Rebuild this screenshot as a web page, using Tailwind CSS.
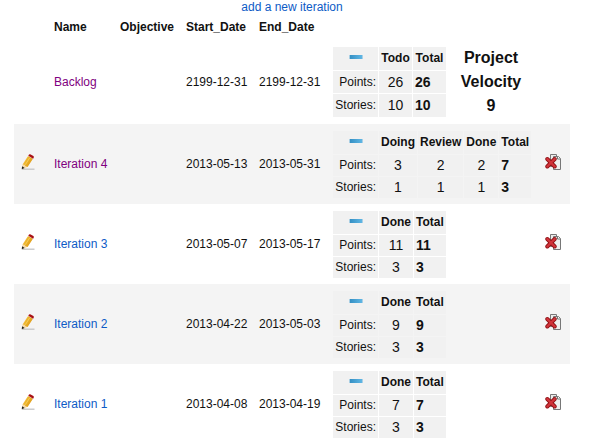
<!DOCTYPE html>
<html lang="en">
<head>
<meta charset="utf-8">
<title>Iterations</title>
<script src="https://cdn.jsdelivr.net/npm/@tailwindcss/browser@4"></script>
</head>
<body class="bg-white pl-[14px] pr-[27px] font-['Liberation_Sans',Arial,sans-serif] text-xs text-[#111]">
<svg class="absolute size-0" aria-hidden="true">
  <defs>
    <linearGradient id="bar"><stop offset="0" stop-color="#3590c4"/><stop offset="1" stop-color="#5fb6e4"/></linearGradient>
    <linearGradient id="wood" x1="0" y1="0" x2="1" y2="0.6"><stop offset="0" stop-color="#f9c93c"/><stop offset="1" stop-color="#dd9a18"/></linearGradient>
    <symbol id="minus" viewBox="0 0 14 4"><rect width="14" height="4" fill="#a9cfe4"/><rect x="1" width="12" height="4" fill="url(#bar)"/></symbol>
    <symbol id="pencil" viewBox="0 0 16 16">
      <path d="M2 15.2h12.5" stroke="#c8c8c8" stroke-width="1.4"/>
      <path d="M7.6 2.6l4.6 2.7-5.5 8-4.7 1.9.6-4.9z" fill="#f6d9a4"/>
      <path d="M8.2 1.9l4.7 2.9-5.3 8.1-2.200-.8-.8-1.300-1.800-.4z" fill="url(#wood)"/>
      <path d="M9.7 3.9L5.4 10.6" stroke="#fbdc70" stroke-width=".7"/>
      <path d="M8.2 1.9l4.700 2.900.5-1-4.600-2.900z" fill="#e8e3dc"/>
      <path d="M8.7.9q.5-.9 1.5-.6l3.200 1.800q.8.7.3 1.600l-.6 1-4.700-2.900z" fill="#a90f14"/>
      <path d="M1.700 15.300l.4-3.100 2.500 1.900z" fill="#222"/>
    </symbol>
    <symbol id="remove" viewBox="0 0 16 16">
      <path d="M5.500.5h6v12h-6z" fill="#ececec" stroke="#777"/>
      <path d="M8.500 2.500h5l2 2v11h-7z" fill="#eef0ee" stroke="#777"/>
      <path d="M12.500 2.500v2.500h3" fill="#fff" stroke="#777"/>
      <path d="M2.300 5l7.400 7.500M9.700 5l-7.400 7.500" stroke="#8f1014" stroke-width="4" stroke-linecap="round"/>
      <path d="M2.300 5l7.400 7.500M9.700 5l-7.400 7.500" stroke="#d0343a" stroke-width="2.400" stroke-linecap="round"/>
    </symbol>
  </defs>
</svg>

<div class="text-center leading-[14px]"><a href="#" class="text-[#0d5bc6]">add a new iteration</a></div>

<table class="w-full table-fixed border-collapse leading-[14px] whitespace-nowrap">
  <colgroup><col class="w-[34px]"><col class="w-[66px]"><col class="w-[66px]"><col class="w-[73px]"><col class="w-[74px]"><col class="w-[212px]"><col></colgroup>
  <thead>
    <tr class="h-[26px] text-left">
      <td></td>
      <th scope="col" class="px-[6px]">Name</th>
      <th scope="col" class="px-[6px]">Objective</th>
      <th scope="col" class="px-[6px]">Start_Date</th>
      <th scope="col" class="px-[6px]">End_Date</th>
      <td></td>
      <td></td>
    </tr>
  </thead>
  <tbody>
    <tr class="h-[84px]">
      <td></td>
      <td class="px-[6px]"><a href="#" class="text-[#800080]">Backlog</a></td>
      <td></td>
      <td class="px-[6px]">2199-12-31</td>
      <td class="px-[6px]">2199-12-31</td>
      <td class="pt-[6px] pl-[5px] align-top">
        <div class="flex">
          <table class="border-separate border-spacing-px">
            <tr class="h-[23px] bg-[#f1f1f1]"><th class="w-[45px] px-[2px] pb-1"><button type="button" aria-label="Collapse" class="mx-auto block"><svg class="h-1 w-[14px]"><use href="#minus"/></svg></button></th><th class="w-[33px] px-[2px] pb-[2px]">Todo</th><th class="w-[33px] px-[2px] pb-[2px]">Total</th></tr>
            <tr class="h-[22px] bg-[#f1f1f1]"><td class="px-[2px] text-right">Points:</td><td class="text-center text-sm leading-4">26</td><td class="px-[2px] text-sm leading-4 font-bold">26</td></tr>
            <tr class="h-[23px] bg-[#f1f1f1]"><td class="px-[2px] pb-[2px] text-right">Stories:</td><td class="pb-[2px] text-center text-sm leading-4">10</td><td class="px-[2px] pb-[2px] text-sm leading-4 font-bold">10</td></tr>
          </table>
          <h2 class="w-[88px] px-3 text-center text-base leading-6 font-bold whitespace-normal">Project Velocity 9</h2>
        </div>
      </td>
      <td></td>
    </tr>
    <tr class="h-[80px] bg-[#f4f4f4]">
      <td class="pb-1 pl-[6px]"><button type="button" aria-label="Edit Iteration 4" class="block"><svg class="size-4"><use href="#pencil"/></svg></button></td>
      <td class="px-[6px]"><a href="#" class="text-[#800080]">Iteration 4</a></td>
      <td></td>
      <td class="px-[6px]">2013-05-13</td>
      <td class="px-[6px]">2013-05-31</td>
      <td class="pt-[6px] pl-[5px] align-top">
        <table class="border-separate border-spacing-px">
          <tr class="h-[23px] bg-[#f1f1f1]"><th class="w-[45px] px-[2px] pb-1"><button type="button" aria-label="Collapse" class="mx-auto block"><svg class="h-1 w-[14px]"><use href="#minus"/></svg></button></th><th class="px-[2px] pb-[2px]">Doing</th><th class="px-[2px] pb-[2px]">Review</th><th class="px-[2px] pb-[2px]">Done</th><th class="px-[2px] pb-[2px]">Total</th></tr>
          <tr class="h-[21px] bg-[#f1f1f1]"><td class="px-[2px] pb-[2px] text-right">Points:</td><td class="pb-[2px] text-center text-sm leading-4">3</td><td class="pb-[2px] text-center text-sm leading-4">2</td><td class="pb-[2px] text-center text-sm leading-4">2</td><td class="px-[2px] pb-[2px] text-sm leading-4 font-bold">7</td></tr>
          <tr class="h-[21px] bg-[#f1f1f1]"><td class="px-[2px] pb-[2px] text-right">Stories:</td><td class="pb-[2px] text-center text-sm leading-4">1</td><td class="pb-[2px] text-center text-sm leading-4">1</td><td class="pb-[2px] text-center text-sm leading-4">1</td><td class="px-[2px] pb-[2px] text-sm leading-4 font-bold">3</td></tr>
        </table>
      </td>
      <td class="pb-1 pl-[6px]"><button type="button" aria-label="Delete Iteration 4" class="block"><svg class="size-4"><use href="#remove"/></svg></button></td>
    </tr>
    <tr class="h-[80px]">
      <td class="pb-1 pl-[6px]"><button type="button" aria-label="Edit Iteration 3" class="block"><svg class="size-4"><use href="#pencil"/></svg></button></td>
      <td class="px-[6px]"><a href="#" class="text-[#0d5bc6]">Iteration 3</a></td>
      <td></td>
      <td class="px-[6px]">2013-05-07</td>
      <td class="px-[6px]">2013-05-17</td>
      <td class="pt-[6px] pl-[5px] align-top">
        <table class="border-separate border-spacing-px">
          <tr class="h-[23px] bg-[#f1f1f1]"><th class="w-[45px] px-[2px] pb-1"><button type="button" aria-label="Collapse" class="mx-auto block"><svg class="h-1 w-[14px]"><use href="#minus"/></svg></button></th><th class="px-[2px] pb-[2px]">Done</th><th class="px-[2px] pb-[2px]">Total</th></tr>
          <tr class="h-[21px] bg-[#f1f1f1]"><td class="px-[2px] pb-[2px] text-right">Points:</td><td class="pb-[2px] text-center text-sm leading-4">11</td><td class="px-[2px] pb-[2px] text-sm leading-4 font-bold">11</td></tr>
          <tr class="h-[21px] bg-[#f1f1f1]"><td class="px-[2px] pb-[2px] text-right">Stories:</td><td class="pb-[2px] text-center text-sm leading-4">3</td><td class="px-[2px] pb-[2px] text-sm leading-4 font-bold">3</td></tr>
        </table>
      </td>
      <td class="pb-1 pl-[6px]"><button type="button" aria-label="Delete Iteration 3" class="block"><svg class="size-4"><use href="#remove"/></svg></button></td>
    </tr>
    <tr class="h-[80px] bg-[#f4f4f4]">
      <td class="pb-1 pl-[6px]"><button type="button" aria-label="Edit Iteration 2" class="block"><svg class="size-4"><use href="#pencil"/></svg></button></td>
      <td class="px-[6px]"><a href="#" class="text-[#0d5bc6]">Iteration 2</a></td>
      <td></td>
      <td class="px-[6px]">2013-04-22</td>
      <td class="px-[6px]">2013-05-03</td>
      <td class="pt-[6px] pl-[5px] align-top">
        <table class="border-separate border-spacing-px">
          <tr class="h-[23px] bg-[#f1f1f1]"><th class="w-[45px] px-[2px] pb-1"><button type="button" aria-label="Collapse" class="mx-auto block"><svg class="h-1 w-[14px]"><use href="#minus"/></svg></button></th><th class="px-[2px] pb-[2px]">Done</th><th class="px-[2px] pb-[2px]">Total</th></tr>
          <tr class="h-[21px] bg-[#f1f1f1]"><td class="px-[2px] pb-[2px] text-right">Points:</td><td class="pb-[2px] text-center text-sm leading-4">9</td><td class="px-[2px] pb-[2px] text-sm leading-4 font-bold">9</td></tr>
          <tr class="h-[21px] bg-[#f1f1f1]"><td class="px-[2px] pb-[2px] text-right">Stories:</td><td class="pb-[2px] text-center text-sm leading-4">3</td><td class="px-[2px] pb-[2px] text-sm leading-4 font-bold">3</td></tr>
        </table>
      </td>
      <td class="pb-1 pl-[6px]"><button type="button" aria-label="Delete Iteration 2" class="block"><svg class="size-4"><use href="#remove"/></svg></button></td>
    </tr>
    <tr class="h-[80px]">
      <td class="pb-1 pl-[6px]"><button type="button" aria-label="Edit Iteration 1" class="block"><svg class="size-4"><use href="#pencil"/></svg></button></td>
      <td class="px-[6px]"><a href="#" class="text-[#0d5bc6]">Iteration 1</a></td>
      <td></td>
      <td class="px-[6px]">2013-04-08</td>
      <td class="px-[6px]">2013-04-19</td>
      <td class="pt-[6px] pl-[5px] align-top">
        <table class="border-separate border-spacing-px">
          <tr class="h-[23px] bg-[#f1f1f1]"><th class="w-[45px] px-[2px] pb-1"><button type="button" aria-label="Collapse" class="mx-auto block"><svg class="h-1 w-[14px]"><use href="#minus"/></svg></button></th><th class="px-[2px] pb-[2px]">Done</th><th class="px-[2px] pb-[2px]">Total</th></tr>
          <tr class="h-[21px] bg-[#f1f1f1]"><td class="px-[2px] pb-[2px] text-right">Points:</td><td class="pb-[2px] text-center text-sm leading-4">7</td><td class="px-[2px] pb-[2px] text-sm leading-4 font-bold">7</td></tr>
          <tr class="h-[21px] bg-[#f1f1f1]"><td class="px-[2px] pb-[2px] text-right">Stories:</td><td class="pb-[2px] text-center text-sm leading-4">3</td><td class="px-[2px] pb-[2px] text-sm leading-4 font-bold">3</td></tr>
        </table>
      </td>
      <td class="pb-1 pl-[6px]"><button type="button" aria-label="Delete Iteration 1" class="block"><svg class="size-4"><use href="#remove"/></svg></button></td>
    </tr>
  </tbody>
</table>
</body>
</html>
